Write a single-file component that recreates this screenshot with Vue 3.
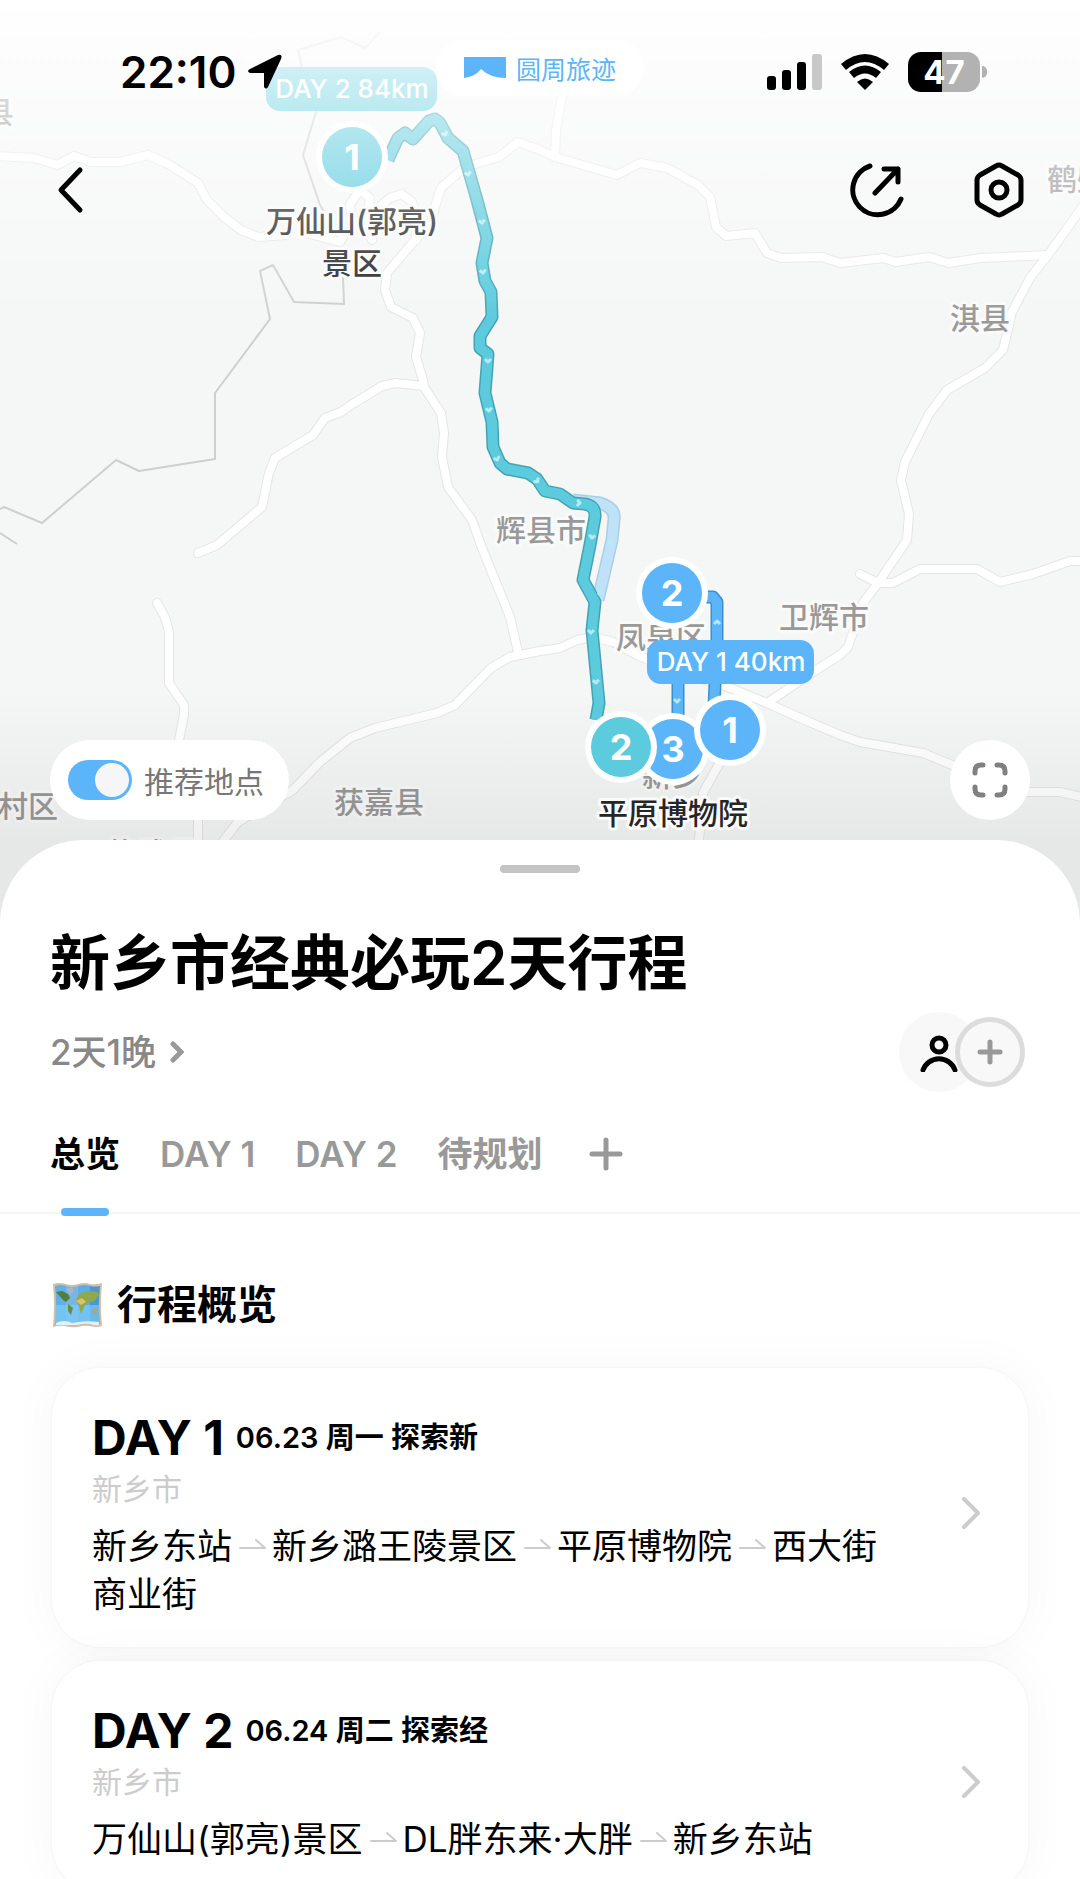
<script setup>
import { ref } from 'vue'

const showSuggested = ref(true)
const activeTab = ref('overview')

const tabs = [
  { id: 'overview', label: '总览' },
  { id: 'day1', label: 'DAY 1' },
  { id: 'day2', label: 'DAY 2' },
  { id: 'unplanned', label: '待规划' }
]

const days = [
  {
    name: 'DAY 1',
    summary: '06.23 周一 探索新',
    city: '新乡市',
    stops: ['新乡东站', '新乡潞王陵景区', '平原博物院', '西大街商业街']
  },
  {
    name: 'DAY 2',
    summary: '06.24 周二 探索经',
    city: '新乡市',
    stops: ['万仙山(郭亮)景区', 'DL胖东来·大胖', '新乡东站']
  }
]

const roads = [
  'M-4 156L34 158L57 165L74 156L91 162L120 162L148 155L170 165L198 183L207 200L224 217L241 230L258 237L286 235',
  'M310 234L340 242L352 222L350 204L360 190L370 198L366 222L372 240',
  'M380 206L390 198L402 194L412 202L416 214L416 240',
  'M562 96L556 130L555 157',
  'M415 240L387 273L385 290L391 307L413 318L420 333L416 357L423 380L424 387L441 413L444 433L442 457L448 487L472 520L482 548L510 617L518 652',
  'M415 240L431 222L437 200L441 188L465 167L499 157L518 142L540 150L555 157L617 175L640 163L667 168L698 185L710 197L716 227L726 236L755 233L767 253L781 258L822 257L840 263L884 258L895 262L929 257L948 263L981 258L1048 255',
  'M1086 202L1048 255L1030 278L1012 312L1003 350L985 368L947 390L929 414L905 462L901 480L909 514L907 540L878 583L863 603L848 647L840 655L813 672L767 703',
  'M860 574L878 583L893 583L920 569L977 569L1000 582L1033 574L1070 561L1086 561',
  'M423 386L396 383L382 386L351 405L341 412L325 418L313 435L275 458L269 473L262 507L217 545L198 553',
  'M157 603L165 617L169 632L169 683L184 705L184 715L179 740L198 820L198 920',
  'M200 880L224 840L238 822L293 790L320 762L350 738L375 728L437 713L455 705L491 668L510 657L540 651L560 648L577 640L593 637L613 642L637 655L680 673L723 685L767 703L800 718L840 735L860 742L923 753L957 767L1027 792L1060 792L1086 798',
  'M724 755L703 793L699 840L699 920'
]

const borders = [
  'M0 509L4 507L42 523L116 460L139 471L215 459L215 393L270 319L260 271L273 265L294 302L344 304L343 277',
  'M0 533L17 544',
  'M380 32L365 48L341 37L298 50L303 72L316 112L303 155L320 205L343 243'
]

const dayTwoRoute =
  'M388 160L391 153L398 138L405 133L413 139L429 121L435 119L440 123L448 138L463 151L469 172L477 200L487 238L482 263L485 281L491 292L492 317L480 336L480 348L488 354L485 393L492 422L493 447L500 463L507 469L528 473L537 479L545 491L560 494L573 503L585 504Q596 506 595 517L590 545L583 580L595 602L592 630L599 703L596 720'

const routes = [
  { d: 'M573 500L600 503Q616 508 614 520L612 540L598 600', edge: '#a9cfe6', fill: '#bfe2f8' },
  { d: dayTwoRoute, edge: '#45a3b1', fill: '#5ccbde' },
  { d: 'M706 597H713L717 602L717 640L714 706', edge: '#3d8fce', fill: '#5cb5f8' },
  { d: 'M678 680V720', edge: '#3d8fce', fill: '#5cb5f8' }
]

const chevrons = [
  [445, 134, -25], [468, 174, -12], [482, 222, -8], [483, 272, -10], [488, 361, 0], [489, 410, -8],
  [497, 459, -22], [537, 481, -40], [579, 503, -85], [592, 537, 8], [611, 543, 190], [601, 593, 190],
  [591, 632, 0], [596, 682, -5], [717, 622, 180], [677, 701, 0]
]

const places = [
  { name: '县', x: -16, y: 123 },
  { name: '鹤壁市', x: 1047, y: 190 },
  { name: '淇县', x: 950, y: 329 },
  { name: '辉县市', x: 496, y: 541 },
  { name: '卫辉市', x: 779, y: 628 },
  { name: '凤泉区', x: 616, y: 648 },
  { name: '村区', x: -2, y: 817 },
  { name: '获嘉县', x: 334, y: 813 },
  { name: '修武县', x: 107, y: 864 },
  { name: '新乡', x: 642, y: 786 }
]

const pins = [
  { n: 1, x: 352, y: 157, color: '#5ccbde' },
  { n: 2, x: 672, y: 593, color: '#5cb5f8' },
  { n: 3, x: 673, y: 749, color: '#5cb5f8' },
  { n: 1, x: 730, y: 730, color: '#5cb5f8' },
  { n: 2, x: 621, y: 747, color: '#5ccbde' }
]
</script>

<template>
  <main class="screen">
    <section class="map">
      <svg class="map-canvas" viewBox="0 0 1080 920" preserveAspectRatio="xMidYMin slice" role="img" aria-label="行程地图">
        <defs>
          <linearGradient id="fade-top" x1="0" y1="0" x2="0" y2="1">
            <stop offset="0" stop-color="#fff" />
            <stop offset="0.2" stop-color="#fff" stop-opacity="0.72" />
            <stop offset="0.5" stop-color="#fff" stop-opacity="0.44" />
            <stop offset="1" stop-color="#fff" stop-opacity="0" />
          </linearGradient>
          <linearGradient id="fade-bottom" x1="0" y1="0" x2="0" y2="1">
            <stop offset="0" stop-color="#000" stop-opacity="0" />
            <stop offset="1" stop-color="#000" stop-opacity="0.06" />
          </linearGradient>
        </defs>
        <rect width="1080" height="920" fill="#f5f6f6" />
        <path v-for="d in borders" :key="d" :d="d" class="border-line" />
        <path v-for="d in roads" :key="'e' + d" :d="d" class="road-edge" />
        <path v-for="d in roads" :key="d" :d="d" class="road" />
        <text v-for="p in places" :key="p.name" :x="p.x" :y="p.y" class="place">{{ p.name }}</text>
        <g v-for="r in routes" :key="r.d">
          <path :d="r.d" class="route-edge" :stroke="r.edge" />
          <path :d="r.d" class="route" :stroke="r.fill" />
        </g>
        <path
          v-for="c in chevrons"
          :key="c.join()"
          d="M-3 -2L0 1L3 -2"
          class="chevron"
          :transform="`translate(${c[0]} ${c[1]}) rotate(${c[2]})`"
        />
        <rect y="690" width="1080" height="150" fill="url(#fade-bottom)" />
        <rect y="840" width="1080" height="80" fill="#000" fill-opacity="0.06" />
        <g v-for="p in pins" :key="p.x">
          <circle :cx="p.x" :cy="p.y" r="36" fill="#fff" />
          <circle :cx="p.x" :cy="p.y" r="30" :fill="p.color" />
          <text :x="p.x" :y="p.y + 13" class="pin-number">{{ p.n }}</text>
        </g>
        <text x="352" y="232" class="stop">万仙山(郭亮)</text>
        <text x="352" y="274" class="stop">景区</text>
        <text x="673" y="824" class="stop">平原博物院</text>
        <rect x="647" y="640" width="167" height="44" rx="14" fill="#5cb5f8" />
        <text x="731" y="671" class="badge">DAY 1 40km</text>
        <rect x="266" y="67" width="171" height="44" rx="14" fill="#5ccbde" />
        <text x="352" y="98" class="badge">DAY 2 84km</text>
        <rect width="1080" height="320" fill="url(#fade-top)" />
      </svg>

      <div class="overlay">
        <header class="status">
          <div class="clock">
            <time>22:10</time>
            <svg width="36" height="36" viewBox="0 0 36 36" aria-hidden="true">
              <path d="M31 1Q36 0 34 5L21 33Q19 36 17 33V19H3Q-1 17 3 15Z" />
            </svg>
          </div>
          <div class="brand">
            <svg width="42" height="22" viewBox="0 0 42 22" aria-hidden="true">
              <path d="M0 0H42V21Q26 21 17 12Q11 20 0 21Z" fill="#5cb5f8" />
            </svg>
            <span>圆周旅迹</span>
          </div>
          <div class="indicators">
            <svg width="55" height="36" viewBox="0 0 55 36" aria-hidden="true">
              <rect x="0" y="22" width="9" height="14" rx="3" />
              <rect x="15" y="16" width="9" height="20" rx="3" />
              <rect x="30" y="8" width="9" height="28" rx="3" />
              <rect x="45" y="0" width="10" height="36" rx="3" fill="#c8c8c8" />
            </svg>
            <svg width="48" height="36" viewBox="0 0 48 36" aria-hidden="true">
              <path d="M0 10Q24 -10 48 10L43 16Q24 0 5 16Z" />
              <path d="M8 18Q24 5 40 18L35 24Q24 15 13 24Z" />
              <path d="M16 28Q24 21 32 28L24 36Z" />
            </svg>
            <div class="battery"><span>47</span></div>
          </div>
        </header>

        <nav class="topbar">
          <button type="button" aria-label="返回">
            <svg width="28" height="48" viewBox="0 0 28 48" class="ink">
              <path d="M24 4L5 24L24 44" />
            </svg>
          </button>
          <span class="grow"></span>
          <button type="button" aria-label="分享">
            <svg width="54" height="56" viewBox="0 0 54 56" class="ink">
              <path d="M20 4A25 25 0 1 0 51 37M25 31L48 7M34 7H48V20" />
            </svg>
          </button>
          <button type="button" aria-label="设置">
            <svg width="50" height="56" viewBox="0 0 50 56" class="ink">
              <path d="M22 4Q25 2 28 4L44 13Q47 15 47 18V38Q47 41 44 43L28 52Q25 54 22 52L6 43Q3 41 3 38V18Q3 15 6 13Z" />
              <circle cx="25" cy="28" r="8" />
            </svg>
          </button>
        </nav>

        <div class="map-controls">
          <label class="suggest">
            <input v-model="showSuggested" type="checkbox" role="switch" />
            <span>推荐地点</span>
          </label>
          <button type="button" class="fullscreen" aria-label="全屏">
            <svg width="36" height="36" viewBox="0 0 36 36">
              <path d="M3 11V9Q3 3 9 3H11M25 3H27Q33 3 33 9V11M33 25V27Q33 33 27 33H25M11 33H9Q3 33 3 27V25" />
            </svg>
          </button>
        </div>
      </div>
    </section>

    <section class="sheet">
      <div class="handle"></div>
      <h1>新乡市经典必玩2天行程</h1>
      <div class="meta">
        <button type="button" class="duration">
          2天1晚
          <svg width="14" height="22" viewBox="0 0 14 22"><path d="M3 3L11 11L3 19" /></svg>
        </button>
        <div class="members">
          <span class="avatar">
            <svg width="40" height="40" viewBox="0 0 40 40" aria-hidden="true">
              <circle cx="20" cy="13" r="7" />
              <path d="M4 38A17 17 0 0 1 36 38" />
            </svg>
          </span>
          <button type="button" class="invite" aria-label="邀请同伴">
            <svg width="26" height="26" viewBox="0 0 26 26"><path d="M13 3V23M3 13H23" /></svg>
          </button>
        </div>
      </div>

      <div class="tabs" role="tablist">
        <button
          v-for="t in tabs"
          :key="t.id"
          type="button"
          role="tab"
          :aria-selected="activeTab === t.id"
          :class="{ active: activeTab === t.id }"
          @click="activeTab = t.id"
        >
          {{ t.label }}
        </button>
        <button type="button" class="add-day" aria-label="添加一天">
          <svg width="34" height="34" viewBox="0 0 34 34"><path d="M17 3V31M3 17H31" /></svg>
        </button>
      </div>

      <div class="overview">
        <h2>
          <svg width="51" height="46" viewBox="0 0 51 46" aria-hidden="true">
            <path d="M1 2Q7 0 14 2Q20 4 26 2Q33 0 38 2Q44 3 50 1Q48 23 50 44Q44 46 38 44Q32 43 26 45Q19 46 13 44Q7 43 1 45Q3 23 1 2Z" fill="#d3bfa6" />
            <path d="M3 4Q8 2 14 4V42Q8 42 3 43Q5 23 3 4Z" fill="#62b0e8" />
            <path d="M14 4Q20 6 26 4V43Q20 44 14 42Z" fill="#79b5e2" />
            <path d="M26 4Q33 2 38 4V42Q32 41 26 43Z" fill="#5aaeea" />
            <path d="M38 4Q43 5 48 4Q46 23 48 42Q43 44 38 42Z" fill="#4c97cf" />
            <path d="M3 23H48Q47 32 48 42Q43 44 38 42Q32 41 26 43Q20 44 14 42Q8 42 3 43Q4 32 3 23Z" fill="#7fd0fa" fill-opacity="0.6" />
            <path d="M4 10L10 9L16 12L18 16L14 20L11 18Z" fill="#50803c" />
            <path d="M16 22L21 26L19 33L16 29Z" fill="#5e8f46" />
            <path d="M14 7L20 5L22 9L18 13Z" fill="#9fb8cb" />
            <path d="M24 18L27 12L35 9L45 10L47 13L42 19L38 20L33 23L29 32L27 24Z" fill="#93a84a" />
            <path d="M24 19L30 16L34 20L29 23Z" fill="#d8c569" />
            <path d="M40 28L44 26L46 30L42 32Z" fill="#b4a56b" />
            <path d="M4 41Q12 37 20 41Q34 38 47 40V43Q42 44 38 42Q32 41 26 43Q14 43 4 43Z" fill="#e2f1f8" />
          </svg>
          行程概览
        </h2>
        <a v-for="day in days" :key="day.name" href="#" class="card">
          <div class="card-body">
            <h3>{{ day.name }} <small>{{ day.summary }}</small></h3>
            <p class="city">{{ day.city }}</p>
            <p class="stops">
              <template v-for="(stop, i) in day.stops" :key="stop">
                <svg v-if="i" class="arrow" width="28" height="14" viewBox="0 0 28 14" aria-label="到">
                  <path d="M1 11H26L17 3" />
                </svg>{{ stop }}</template>
            </p>
          </div>
          <svg class="more" width="18" height="32" viewBox="0 0 18 32" aria-hidden="true">
            <path d="M2 2L16 16L2 30" />
          </svg>
        </a>
      </div>
    </section>
  </main>
</template>

<style>
body {
  margin: 0;
  background: #fff;
}
</style>

<style scoped>
.screen {
  max-height: 100vh;
  overflow: hidden;
  background: #fff;
  color: #000;
  font-family: Inter, "Noto Sans CJK SC", sans-serif;
}

button {
  padding: 0;
  border: 0;
  background: none;
  color: inherit;
  font: inherit;
  cursor: pointer;
}

svg {
  display: block;
  flex: none;
}

h1,
h2,
h3,
p {
  margin: 0;
}

/* Map */
.map {
  position: relative;
  height: 920px;
}

.map-canvas {
  position: absolute;
  inset: 0;
  width: 100%;
  height: 100%;
}

.border-line,
.road,
.road-edge,
.route,
.route-edge,
.chevron {
  fill: none;
  stroke-linejoin: round;
}

.border-line {
  stroke: #cfcfcf;
  stroke-width: 2;
}

.road-edge {
  stroke: #e5e5e5;
  stroke-width: 10;
  stroke-linecap: round;
}

.road {
  stroke: #fff;
  stroke-width: 8;
  stroke-linecap: round;
}

.route-edge {
  stroke-width: 13;
}

.route {
  stroke-width: 10;
}

.chevron {
  stroke: #b5ebf6;
  stroke-width: 3;
}

.place,
.stop {
  font-size: 30px;
  font-weight: 500;
  stroke: #fafafa;
  stroke-width: 6px;
  stroke-linejoin: round;
  paint-order: stroke;
}

.place {
  fill: #999;
}

.stop {
  fill: #262626;
  text-anchor: middle;
}

.pin-number {
  fill: #fff;
  font-size: 36px;
  font-weight: 700;
  text-anchor: middle;
}

.badge {
  fill: #fff;
  font-size: 26px;
  font-weight: 500;
  text-anchor: middle;
}

.overlay {
  position: relative;
  display: flex;
  flex-direction: column;
  box-sizing: border-box;
  height: 820px;
  padding: 40px 50px 0;
}

.status {
  display: grid;
  grid-template-columns: 1fr auto 1fr;
  align-items: center;
  height: 64px;
}

.clock {
  display: flex;
  align-items: center;
  gap: 10px;
  padding-left: 70px;
  font-size: 44px;
  font-weight: 600;
}

.brand {
  display: flex;
  align-items: center;
  align-self: start;
  gap: 10px;
  height: 56px;
  padding: 0 28px;
  border-radius: 28px;
  background: #fff;
  color: #5cb5f8;
  font-size: 25px;
}

.indicators {
  display: flex;
  align-items: center;
  justify-content: flex-end;
  gap: 19px;
  padding-right: 50px;
}

.battery {
  position: relative;
  width: 72px;
  border-radius: 13px;
  background: linear-gradient(90deg, #000 47%, #b2b2b2 47%);
  color: #fff;
  font-size: 33px;
  font-weight: 700;
  line-height: 40px;
  text-align: center;
}

.battery::after {
  content: "";
  position: absolute;
  top: 14px;
  right: -7px;
  width: 5px;
  height: 12px;
  border-radius: 0 5px 5px 0;
  background: #b2b2b2;
}

.topbar {
  display: flex;
  align-items: center;
  gap: 70px;
  height: 56px;
  margin-top: 58px;
  padding: 0 6px;
}

.grow,
.card-body {
  flex: 1;
}

.ink {
  fill: none;
  stroke: #000;
  stroke-width: 5;
  stroke-linecap: round;
  stroke-linejoin: round;
}

.map-controls {
  display: flex;
  align-items: center;
  justify-content: space-between;
  margin-top: auto;
}

.suggest {
  display: flex;
  align-items: center;
  gap: 12px;
  height: 80px;
  padding: 0 25px 0 18px;
  border-radius: 40px;
  background: #fff;
  color: #777;
  font-size: 30px;
}

.suggest input {
  appearance: none;
  display: flex;
  width: 64px;
  height: 40px;
  margin: 0;
  padding: 3px;
  box-sizing: border-box;
  border-radius: 20px;
  background: #ddd;
}

.suggest input::before {
  content: "";
  width: 34px;
  height: 34px;
  border-radius: 50%;
  background: #f6f6f6;
}

.suggest input:checked {
  justify-content: flex-end;
  background: #5cb5f8;
}

.fullscreen {
  display: grid;
  place-items: center;
  width: 80px;
  height: 80px;
  border-radius: 50%;
  background: #fff;
}

.fullscreen path {
  fill: none;
  stroke: #808080;
  stroke-width: 5;
  stroke-linecap: round;
}

/* Sheet */
.sheet {
  position: relative;
  margin-top: -80px;
  padding-top: 25px;
  border-radius: 84px 84px 0 0;
  background: #fff;
}

.handle {
  width: 80px;
  height: 8px;
  margin: 0 auto;
  border-radius: 4px;
  background: #c4c4c4;
}

h1 {
  margin-top: 54px;
  padding: 0 50px;
  font-size: 60px;
  font-weight: 600;
  line-height: 72px;
}

.meta {
  display: flex;
  align-items: center;
  justify-content: space-between;
  height: 80px;
  margin-top: 13px;
  padding: 0 55px 0 50px;
}

.duration {
  display: flex;
  align-items: center;
  gap: 14px;
  color: #888;
  font-size: 35px;
  font-weight: 500;
  line-height: 48px;
}

.duration path,
.add-day path,
.invite path {
  fill: none;
  stroke: #999;
  stroke-width: 5;
  stroke-linecap: round;
}

.members {
  display: flex;
  align-items: center;
}

.avatar {
  display: grid;
  place-items: center;
  width: 80px;
  height: 80px;
  border-radius: 50%;
  background: #f8f8f8;
}

.avatar svg {
  fill: none;
  stroke: #000;
  stroke-width: 5;
  stroke-linecap: round;
}

.invite {
  display: grid;
  place-items: center;
  width: 70px;
  height: 70px;
  margin-left: -24px;
  box-sizing: border-box;
  border: 5px solid #dcdcdc;
  border-radius: 50%;
  background: #f8f8f8;
}

.tabs {
  display: flex;
  gap: 40px;
  padding: 38px 50px 0;
  border-bottom: 2px solid #f5f5f5;
  color: #999;
  font-size: 35px;
  font-weight: 600;
}

.tabs button {
  position: relative;
  height: 82px;
  padding-bottom: 34px;
  line-height: 48px;
}

.tabs .active {
  color: #000;
}

.tabs .active::after {
  content: "";
  position: absolute;
  bottom: -4px;
  left: 50%;
  width: 48px;
  height: 8px;
  margin-left: -24px;
  border-radius: 4px;
  background: #5cb5f8;
}

.tabs .add-day {
  margin-left: 6px;
}

.overview {
  display: flex;
  flex-direction: column;
  gap: 14px;
  padding: 65px 52px 40px;
}

h2 {
  display: flex;
  align-items: center;
  gap: 14px;
  margin-bottom: 23px;
  font-size: 40px;
  font-weight: 600;
  line-height: 52px;
}

.card {
  display: flex;
  align-items: center;
  gap: 60px;
  padding: 40px 48px 29px 40px;
  border-radius: 48px;
  background: #fff;
  box-shadow: 0 0 3px rgba(0, 0, 0, 0.06), 0 0 50px rgba(0, 0, 0, 0.04);
  color: #000;
  text-decoration: none;
}

h3 {
  display: flex;
  align-items: center;
  gap: 12px;
  height: 60px;
  font-size: 48px;
  font-weight: 700;
  line-height: 60px;
}

h3 small {
  font-size: 29px;
  font-weight: 600;
}

.city {
  color: #ccc;
  font-size: 30px;
  line-height: 42px;
}

.stops {
  margin-top: 12px;
  font-size: 35px;
  line-height: 48px;
}

.arrow {
  display: inline-block;
  margin: 0 5px 0 7px;
  vertical-align: 8px;
}

.arrow path,
.more path {
  fill: none;
  stroke: #ccc;
  stroke-linecap: round;
  stroke-linejoin: round;
}

.arrow path {
  stroke-width: 2;
}

.more path {
  stroke-width: 4;
}
</style>
